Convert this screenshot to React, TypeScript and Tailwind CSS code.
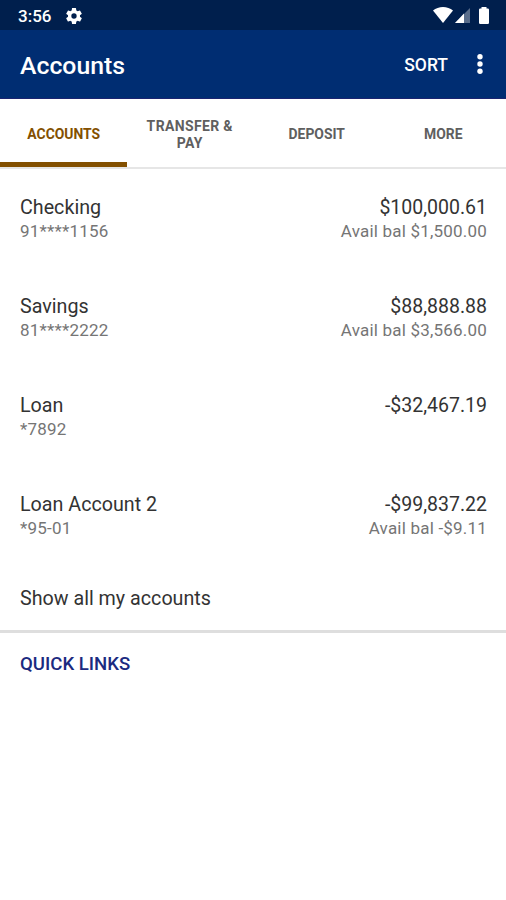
const accounts = [
  { name: "Checking", number: "91****1156", balance: "$100,000.61", available: "Avail bal $1,500.00" },
  { name: "Savings", number: "81****2222", balance: "$88,888.88", available: "Avail bal $3,566.00" },
  { name: "Loan", number: "*7892", balance: "-$32,467.19", available: "" },
  { name: "Loan Account 2", number: "*95-01", balance: "-$99,837.22", available: "Avail bal -$9.11" },
];

const tabs = ["ACCOUNTS", "TRANSFER & PAY", "DEPOSIT", "MORE"];

function StatusBar() {
  return (
    <div className="flex h-[30px] items-center bg-[#001f4d] pl-[18px] pr-[17px] text-white">
      <span className="pt-[2px] text-[17px] font-medium leading-[28px]">3:56</span>
      <svg className="ml-[13px] mt-px" width="20" height="20" viewBox="0 0 24 24" fill="currentColor">
        <path d="M19.14 12.94c.04-.3.06-.61.06-.94 0-.32-.02-.64-.07-.94l2.03-1.58a.49.49 0 0 0 .12-.61l-1.92-3.32a.488.488 0 0 0-.59-.22l-2.39.96c-.5-.38-1.03-.7-1.62-.94l-.36-2.54a.484.484 0 0 0-.48-.41h-3.84c-.24 0-.43.17-.47.41l-.36 2.54c-.59.24-1.13.57-1.62.94l-2.39-.96c-.22-.08-.47 0-.59.22L2.74 8.87c-.12.21-.08.47.12.61l2.03 1.58c-.05.3-.09.63-.09.94s.02.64.07.94l-2.03 1.58a.49.49 0 0 0-.12.61l1.92 3.32c.12.22.37.29.59.22l2.39-.96c.5.38 1.03.7 1.62.94l.36 2.54c.05.24.24.41.48.41h3.84c.24 0 .44-.17.47-.41l.36-2.54c.59-.24 1.13-.56 1.62-.94l2.39.96c.22.08.47 0 .59-.22l1.92-3.32c.12-.22.07-.47-.12-.61l-2.01-1.58zM12 15.2A3.2 3.2 0 1 1 12 8.8a3.2 3.2 0 0 1 0 6.4z" />
      </svg>
      <div className="ml-auto flex items-center">
        <svg width="20" height="16" viewBox="0 0 20 16" fill="currentColor">
          <path d="M0 3.5C2.8 1.2 6.2 0 10 0s7.2 1.2 10 3.5L10 16z" />
        </svg>
        <svg className="ml-[2px]" width="15" height="16" viewBox="0 0 15 16" fill="currentColor">
          <path d="M0 16L15 1v15z" opacity=".35" />
          <path d="M0 16L9 6.4V16z" />
        </svg>
        <svg className="ml-[9px]" width="10" height="17" viewBox="0 0 10 17" fill="currentColor">
          <path d="M2.5 0h5v1.5h1.300A1.200 1.200 0 0 1 10 2.700v13.100A1.200 1.200 0 0 1 8.800 17H1.200A1.200 1.200 0 0 1 0 15.800V2.700a1.200 1.200 0 0 1 1.200-1.200h1.300z" />
        </svg>
      </div>
    </div>
  );
}

export default function App() {
  return (
    <main className="min-h-screen bg-white font-['Roboto',sans-serif]">
      <StatusBar />

      <header className="flex h-[69px] items-center border-b border-[#1b2470] bg-[#002d72] pl-5 pr-[22px] text-white">
        <h1 className="pt-[3px] text-[24.8px] font-medium">Accounts</h1>
        <button className="ml-auto pt-[3px] text-[17.5px] font-medium">SORT</button>
        <svg className="ml-[28px]" width="8" height="22" viewBox="0 0 8 22" fill="currentColor">
          <circle cx="4" cy="3.8" r="2.7" />
          <circle cx="4" cy="11" r="2.7" />
          <circle cx="4" cy="18.2" r="2.7" />
        </svg>
      </header>

      <nav className="grid h-[70px] grid-cols-4 border-b-2 border-[#e6e6e6]">
        {tabs.map((tab, index) => (
          <button
            key={tab}
            className={
              index === 0
                ? "border-b-[5px] border-[#835000] pl-px pt-[7px] text-[13.9px] font-bold text-[#835000]"
                : index === 1
                  ? "px-4 pt-[3px] text-[14px] font-bold leading-[17px] tracking-[0.35px] text-[#5f5f5f]"
                  : "pl-px pt-[2px] text-[13.9px] font-bold leading-[17px] text-[#5f5f5f]"
            }
          >
            {tab}
          </button>
        ))}
      </nav>

      <ul className="pt-[26px]">
        {accounts.map((account) => (
          <li key={account.name} className="flex h-[99px] justify-between pl-5 pr-[19px]">
            <div>
              <p className="text-[19.7px] leading-[26px] text-[#333333]">{account.name}</p>
              <p className="-mt-[2px] text-[17px] leading-6 tracking-[0.2px] text-[#757575]">{account.number}</p>
            </div>
            <div className="text-right">
              <p className="text-[19.5px] leading-[26px] text-[#333333]">{account.balance}</p>
              <p className="-mt-[2px] text-[17px] leading-6 tracking-[0.2px] text-[#757575]">{account.available}</p>
            </div>
          </li>
        ))}
      </ul>

      <div className="-mt-[5px] h-[47px] border-b-[3px] border-[#dedede] pl-5">
        <p className="text-[19.7px] leading-[26px] text-[#333333]">Show all my accounts</p>
      </div>

      <p className="mt-[19px] pl-5 text-[18.6px] font-medium leading-6 text-[#1b2a80]">QUICK LINKS</p>
    </main>
  );
}
